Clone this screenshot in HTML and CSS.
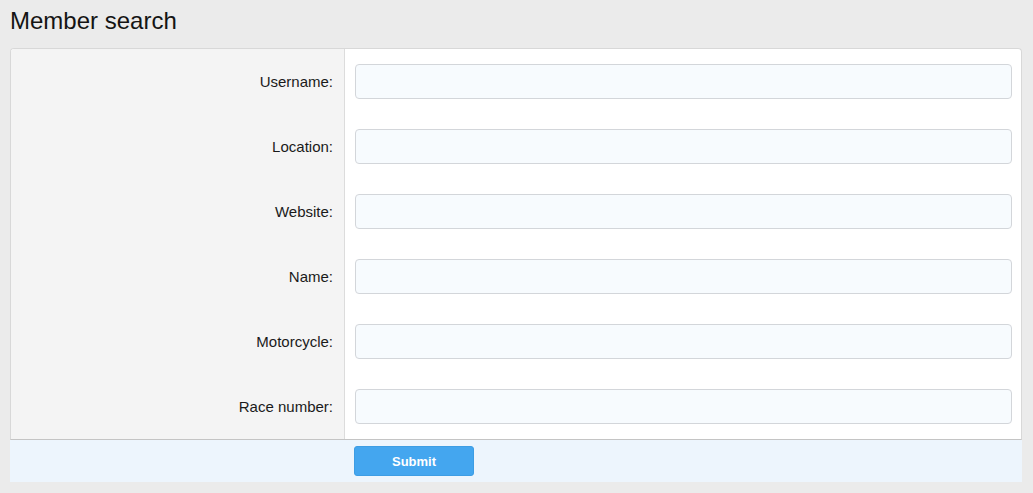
FILE: index.html
```html
<!DOCTYPE html>
<html>
<head>
<meta charset="utf-8">
<link rel="stylesheet" href="styles.css">
</head>
<body>
<h1 class="title">Member search</h1>
<form class="search-form">
  <div class="form-body">
    <div class="row"><label class="label">Username:</label><div class="field"><input class="input" type="text"></div></div>
    <div class="row"><label class="label">Location:</label><div class="field"><input class="input" type="text"></div></div>
    <div class="row"><label class="label">Website:</label><div class="field"><input class="input" type="text"></div></div>
    <div class="row"><label class="label">Name:</label><div class="field"><input class="input" type="text"></div></div>
    <div class="row"><label class="label">Motorcycle:</label><div class="field"><input class="input" type="text"></div></div>
    <div class="row"><label class="label">Race number:</label><div class="field"><input class="input" type="text"></div></div>
  </div>
  <div class="form-footer">
    <div class="footer-spacer"></div>
    <button class="submit" type="button">Submit</button>
  </div>
</form>
</body>
</html>
```
FILE: styles.css
```css
html, body {
  margin: 0;
  padding: 0;
}
body {
  background: #ebebeb;
  font-family: "Liberation Sans", Arial, Helvetica, sans-serif;
  color: #141414;
  padding: 0 11px 0 10px;
}
.title {
  margin: 0;
  padding: 7px 0 13px 0;
  font-size: 24px;
  line-height: 28px;
  font-weight: normal;
  color: #141414;
}
.search-form {
  margin: 0;
}
.form-body {
  background: #fff;
  border: 1px solid #d8d8d8;
  border-bottom: 1px solid #c4c4c4;
  border-radius: 4px 4px 0 0;
  overflow: hidden;
}
.row {
  display: flex;
  align-items: stretch;
}
.label {
  flex: 0 0 322px;
  background: #f4f4f4;
  border-right: 1px solid #dcdcdc;
  padding-right: 11px;
  text-align: right;
  font-size: 15px;
  color: #1a1a1a;
  display: flex;
  align-items: center;
  justify-content: flex-end;
}
.field {
  flex: 1;
  padding: 15px 9px 15px 10px;
}
.input {
  display: block;
  box-sizing: border-box;
  width: 100%;
  height: 35px;
  margin: 0;
  border: 1px solid #d3d6da;
  border-radius: 4px;
  background: #f7fbfe;
  outline: none;
}
.form-footer {
  display: flex;
  background: #edf5fd;
  padding: 6px 0;
  height: 30px;
}
.footer-spacer {
  flex: 0 0 344px;
}
.submit {
  width: 120px;
  height: 30px;
  margin: 0;
  border: 1px solid #3d9de4;
  border-radius: 3px;
  background: #44a6ef;
  color: #fff;
  font-family: "Liberation Sans", Arial, Helvetica, sans-serif;
  font-size: 13px;
  font-weight: bold;
  cursor: pointer;
}
```
